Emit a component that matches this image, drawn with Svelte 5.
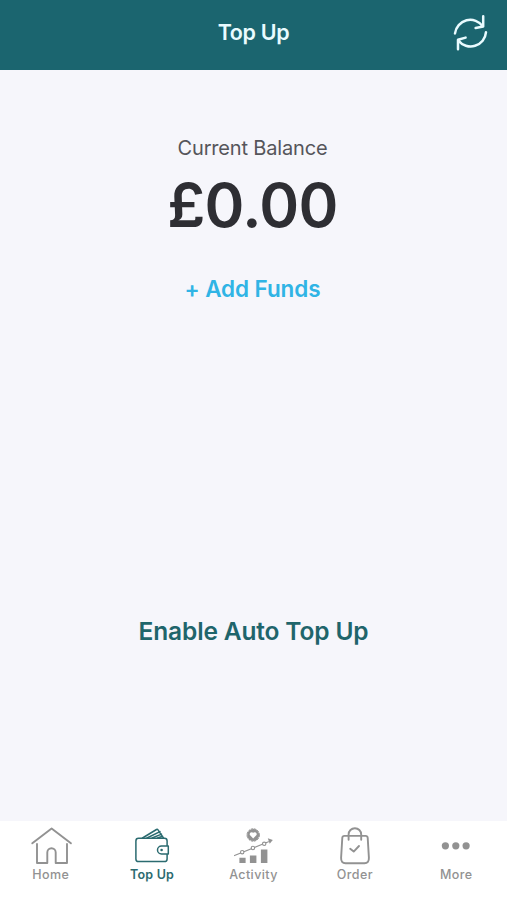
<script>
	let balance = 0;
	let active = 'Top Up';

	const tabs = ['Home', 'Top Up', 'Activity', 'Order', 'More'];

	$: amount = '£' + balance.toFixed(2);
</script>

<svelte:head>
	<title>Top Up</title>
</svelte:head>

<div class="screen">
	<header>
		<h1>Top Up</h1>
		<button class="refresh" aria-label="Refresh">
			<svg width="38" height="38" viewBox="0 0 38 38">
				<path d="M4 20.4a15.4 15.4 0 0 1 27.9-7M32.2 3.2v10.3l-7.6 1.5" />
				<path d="M35 19.2a15.4 15.4 0 0 1-27.6 8.2M7 36.2v-9.4l7.6-2.2" />
			</svg>
		</button>
	</header>

	<main>
		<p class="caption">Current Balance</p>
		<p class="amount">{amount}</p>
		<button class="add">+ Add Funds</button>
		<button class="auto">Enable Auto Top Up</button>
	</main>

	<nav>
		{#each tabs as tab}
			<button class="tab" class:active={tab === active} on:click={() => (active = tab)}>
				<svg width="44" height="42" viewBox="0 0 44 42">
					{#if tab === 'Home'}
						<path d="M3.3 18.3 22.6 3.5l19.3 14.8M8 19v19h10.3V27.5a4.2 4.2 0 0 1 8.4 0V38H38V19" />
					{:else if tab === 'Top Up'}
						<g stroke-width="1.5">
							<rect x="5.9" y="13.3" width="31.2" height="23.2" rx="2.6" />
							<path d="m12.5 13 14-8.5q.9-.5 1.5.4l5.4 8M17 13l13-6.4M22.2 13l9.3-3.9M27.6 13l5-1.8" />
							<path class="cover" d="M38.3 21h-6.8a4 4 0 0 0 0 8h6.8z" />
							<circle class="solid" cx="31.6" cy="25" r="1.3" />
						</g>
					{:else if tab === 'Activity'}
						<circle class="solid" cx="22.2" cy="10" r="6" />
						<circle cx="22.2" cy="10" r="6.2" stroke-width="1" stroke-dasharray="1.8 1.5" />
						<path class="heart" d="m22.2 13.5-3.3-3.4a2.1 2.1 0 0 1 3.3-2.4 2.1 2.1 0 0 1 3.3 2.4z" />
						<path d="m3.5 30.6 34-13.8" stroke-width="1.1" />
						<path class="solid" d="m36.8 13.3 5 1.8-3.1 3.7z" />
						<g class="cover" stroke-width="1.1">
							<circle cx="11.2" cy="27.2" r="1.7" />
							<circle cx="21.9" cy="23" r="1.7" />
							<circle cx="33.2" cy="18.8" r="1.7" />
						</g>
						<path class="solid" d="M8.4 32.7h6.2v5.2H8.4zM18.9 30.5h6.5v7.4h-6.5zM29.9 24.4h6.5v13.5h-6.5z" />
					{:else if tab === 'Order'}
						<path d="M11.3 10.9h21.4q1.8 0 2 1.9l1.2 20q.2 5.4-4.4 5.4h-19q-4.6 0-4.4-5.4l1.2-20q.2-1.9 2-1.9z" />
						<path d="M15.6 14.7V9.5a6.3 6.3 0 0 1 12.6 0v5.2M17.2 23.8l3.5 2.8 5.3-5.6" />
					{:else}
						<circle class="dot" cx="11.4" cy="20.8" r="3.6" />
						<circle class="dot" cx="21.8" cy="20.8" r="3.6" />
						<circle class="dot" cx="32.1" cy="20.8" r="3.6" />
					{/if}
				</svg>
				<span>{tab}</span>
			</button>
		{/each}
	</nav>
</div>

<style>
	:global(body) {
		margin: 0;
	}

	.screen {
		display: flex;
		flex-direction: column;
		height: 100vh;
		overflow: hidden;
		background-color: #f6f6fb;
		font-family: Inter, 'Liberation Sans', sans-serif;
		font-feature-settings: 'calt' 0;
	}

	button {
		padding: 0;
		border: none;
		background: none;
		font-family: inherit;
		font-feature-settings: inherit;
		cursor: pointer;
	}

	svg {
		display: block;
		fill: none;
		stroke: currentColor;
		stroke-linecap: round;
		stroke-linejoin: round;
	}

	header {
		display: grid;
		grid-template-columns: 56px 1fr 56px;
		align-items: center;
		flex: none;
		height: 70px;
		box-sizing: border-box;
		padding-bottom: 6px;
		background-color: #1b656f;
		color: #e9fbff;
	}

	h1 {
		grid-column: 2;
		margin: 0;
		text-align: center;
		font-size: 21.5px;
		line-height: 26px;
		font-weight: 600;
		letter-spacing: -0.35px;
	}

	.refresh {
		color: #e9fbff;
		stroke-width: 2.5;
	}

	main {
		display: flex;
		flex: 1;
		flex-direction: column;
		align-items: center;
		padding: 65px 2px 0 0;
	}

	p {
		margin: 0;
	}

	.caption {
		font-size: 20px;
		line-height: 26px;
		letter-spacing: -0.17px;
		color: #55555a;
	}

	.amount {
		margin-top: 7px;
		font-size: 60.5px;
		line-height: 74px;
		font-weight: 600;
		letter-spacing: -0.6px;
		color: #2e2e33;
	}

	.add {
		margin-top: 32px;
		font-size: 22.5px;
		line-height: 30px;
		font-weight: 600;
		letter-spacing: -0.1px;
		color: #30b4e5;
	}

	.auto {
		margin-top: 311px;
		padding-left: 2px;
		font-size: 24.5px;
		line-height: 32px;
		font-weight: 600;
		letter-spacing: -0.15px;
		color: #1f656b;
	}

	nav {
		display: grid;
		grid-template-columns: repeat(5, 1fr);
		flex: none;
		height: 79px;
		background-color: #fff;
	}

	.tab {
		display: flex;
		flex-direction: column;
		align-items: center;
		padding-top: 4px;
		color: #929292;
		stroke-width: 1.9;
	}

	.tab span {
		font-size: 12.5px;
		line-height: 16px;
		font-weight: 500;
		letter-spacing: 0.4px;
	}

	.active {
		color: #2b6b70;
	}

	.active span {
		font-weight: 600;
		letter-spacing: 0.2px;
	}

	.solid,
	.dot {
		fill: currentColor;
		stroke: none;
	}

	.cover {
		fill: #fff;
	}

	.heart {
		fill: #fff;
		stroke: none;
	}
</style>
